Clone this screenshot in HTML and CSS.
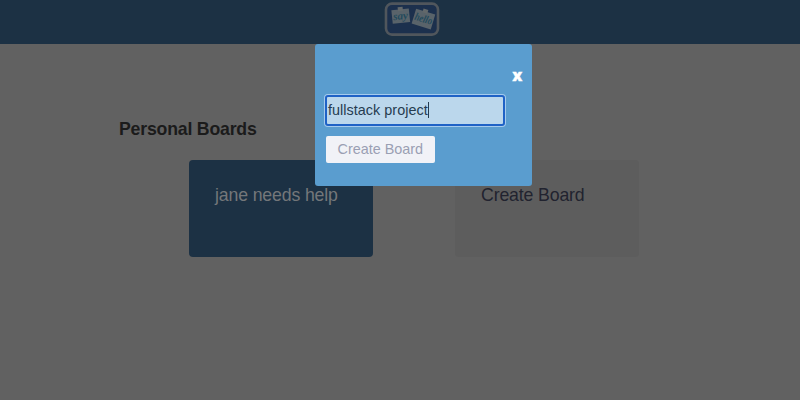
FILE: index.html
```
<!DOCTYPE html>
<html lang="en">
<head>
<meta charset="utf-8">
<title>Boards</title>
<link rel="stylesheet" href="styles.css">
</head>
<body>
<header class="navbar">
  <svg class="logo" width="56" height="34" viewBox="0 0 56 34" role="img" aria-label="say hello">
    <rect x="2" y="1.6" width="52" height="31" rx="6" fill="#1c304d" stroke="#50565c" stroke-width="2.6"/>
    <g transform="rotate(-6 16 14)">
      <rect x="8" y="7.5" width="17.5" height="13.5" fill="#59636a"/>
      <rect x="14.5" y="5" width="5" height="4" fill="#62686a"/>
      <text class="script" x="9" y="17.5" font-size="11" textLength="15" lengthAdjust="spacingAndGlyphs">say</text>
    </g>
    <g transform="rotate(17 40 17)">
      <rect x="29.5" y="9.5" width="20" height="15.5" fill="#59636a"/>
      <rect x="36.5" y="7" width="5" height="4" fill="#62686a"/>
      <text class="script" x="30.5" y="20.5" font-size="11" textLength="18" lengthAdjust="spacingAndGlyphs">hello</text>
    </g>
  </svg>
</header>
<main class="page">
  <h1 class="heading">Personal Boards</h1>
  <div class="boards">
    <a class="board">jane needs help</a>
    <a class="board board-new">Create Board</a>
  </div>
</main>
<section class="modal" role="dialog" aria-label="Create Board">
  <button class="close" type="button">x</button>
  <div class="field"><span>fullstack project</span><i class="caret"></i></div>
  <button class="submit" type="button">Create Board</button>
</section>
</body>
</html>
```
FILE: styles.css
```
* { box-sizing: border-box; }
body {
  margin: 0;
  height: 400px;
  overflow: hidden;
  background: #616161;
  font-family: "Liberation Sans", Arial, sans-serif;
}
.navbar {
  height: 44px;
  background: #1c3144;
  display: flex;
  justify-content: center;
  padding: 2px 0 0 24px;
}
.logo { display: block; }
.script {
  fill: #234a5c;
  font-family: "Liberation Serif", serif;
  font-style: italic;
  font-weight: bold;
}
.page { padding: 75px 119px 0; }
.heading {
  margin: 0;
  font-size: 17.7px;
  letter-spacing: -0.2px;
  line-height: 20px;
  color: #1b1b1b;
}
.boards {
  display: flex;
  gap: 82px;
  margin: 21px 0 0 69.5px;
}
.board {
  width: 184px;
  height: 97px;
  padding: 25px 26.5px;
  border-radius: 4px;
  background: #1c3144;
  color: #74777a;
  font-size: 17.7px;
  letter-spacing: -0.14px;
  line-height: 20px;
  white-space: nowrap;
}
.board-new { background: #5d5d5d; color: #21232f; }
.modal {
  position: absolute;
  left: 315.4px;
  top: 44px;
  width: 217px;
  height: 141.5px;
  padding: 20px 10px;
  display: flex;
  flex-direction: column;
  align-items: flex-start;
  border-radius: 3px;
  background: #5a9dcf;
}
.close {
  align-self: flex-end;
  height: 22px;
  margin-bottom: 9px;
  padding: 0;
  border: 0;
  background: none;
  color: #fff;
  font: 800 16px/22px "Open Sans", sans-serif;
  -webkit-text-stroke: 0.3px #fff;
}
.field {
  display: flex;
  align-items: center;
  width: 180px;
  height: 31px;
  padding: 0 1px 2px 0.5px;
  border: 2px solid #1f62c6;
  border-radius: 3px;
  box-shadow: 0 0 0 1px #a5cbed;
  background: #bbd7ec;
  color: #263c50;
  font-size: 14.4px;
  letter-spacing: 0.04px;
  line-height: 18px;
}
.caret { width: 1px; height: 16px; background: #263c50; }
.submit {
  width: 109px;
  height: 27px;
  margin: 10px 0 0 0.4px;
  padding: 0;
  border: 0;
  border-radius: 2px;
  background: #f1f2f7;
  color: #9a9fb3;
  font: 14.4px/27px "Liberation Sans", Arial, sans-serif;
}
```
